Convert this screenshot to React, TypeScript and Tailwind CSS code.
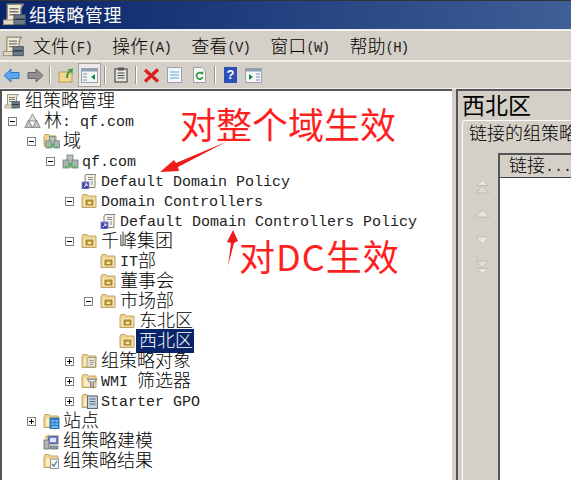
import React from "react";

function Txt({ s, menu }: { s: string; menu?: boolean }) {
  const parts = s.match(/[\x00-\x7f]+|[^\x00-\x7f]+/g) || [];
  return (
    <span className="whitespace-pre leading-[20px]">
      {parts.map((p, i) =>
        /^[\x00-\x7f]/.test(p) ? (
          <span
            key={i}
            className={
              menu
                ? "font-['Liberation_Mono',monospace] text-[14px] tracking-[-0.7px] text-[#222] align-[1px]"
                : "font-['Liberation_Mono',monospace] text-[15px] text-[#222] align-[1px]"
            }
          >
            {p}
          </span>
        ) : (
          <span key={i} className="font-['Noto_Sans_CJK_SC',sans-serif] text-[18px] font-light">{p}</span>
        )
      )}
    </span>
  );
}

const Folder = ({ children }: { children?: React.ReactNode }) => (
  <svg width="17" height="16" viewBox="0 0 17 16" className="shrink-0">
    <path d="M1 3.5 L1 14.5 L15 14.5 L15 3 L7 3 L6 1.5 L2 1.5 Z" fill="#f0d490" stroke="#c0a468" />
    <path d="M3 5.5 H14 V13 H3 Z" fill="#f9ecc4" />
    {children}
  </svg>
);
const OU = () => (
  <Folder>
    <rect x="5" y="7" width="7" height="5" fill="#c9a544" stroke="#8a6d1f" strokeWidth="0.8" />
    <rect x="7" y="9" width="3" height="2" fill="#f6e7a8" />
  </Folder>
);
const Servers = () => (
  <g>
    <rect x="5" y="2" width="6" height="12" fill="#b9c4c4" stroke="#6f7a7a" strokeWidth="0.8" />
    <rect x="1" y="7" width="6" height="8" fill="#a8b4b4" stroke="#6f7a7a" strokeWidth="0.8" />
    <rect x="10" y="7" width="6" height="8" fill="#a8b4b4" stroke="#6f7a7a" strokeWidth="0.8" />
    <rect x="7" y="10" width="3" height="3" fill="#3fbf3f" />
    <rect x="3" y="13" width="2" height="2" fill="#3fbf3f" />
    <rect x="12" y="13" width="2" height="2" fill="#3fbf3f" />
  </g>
);
const Scroll = ({ size = 16 }: { size?: number }) => (
  <svg width={size} height={size} viewBox="0 0 16 16" className="shrink-0">
    <path d="M3.5 1.5 H14.5 C13 2 13 4 12.5 5 V10 H11 L2 14.5 H1.5 C3.5 13 3.5 11 3.5 10 Z" fill="#efe8d4" stroke="#8f8a78" strokeWidth="0.9" />
    <path d="M5 4.5H11M5 6.5H11M5 8.5H9" stroke="#77736a" strokeWidth="0.9" />
    <rect x="1" y="12" width="10" height="3" fill="#e4dcc2" stroke="#9a9480" strokeWidth="0.7" />
    <rect x="8" y="8.5" width="7.5" height="6.5" fill="#6b7b87" stroke="#4a5560" strokeWidth="0.7" />
    <rect x="8.5" y="11" width="6.5" height="1" fill="#2f3a44" />
  </svg>
);
const GpoLink = () => (
  <svg width="17" height="16" viewBox="0 0 17 16" className="shrink-0">
    <path d="M5 1.5 H15 C14 3 14 4 14 5 V14.5 H4 V3 Z" fill="#f4f2ea" stroke="#85826f" />
    <path d="M7 4.5H12M7 6.5H12M10 9H12M10 11H12" stroke="#8a8a8a" />
    <rect x="1" y="9" width="7" height="7" fill="#3b3fa6" stroke="#8a8dc5" />
    <path d="M3 14 L5.5 11.5 M3.8 11 H6 V13.2" stroke="#fff" strokeWidth="1" fill="none" />
  </svg>
);
const Forest = () => (
  <svg width="17" height="16" viewBox="0 0 17 16" className="shrink-0">
    <path d="M8.5 1 L12.5 8 H4.5 Z" fill="#ddd" stroke="#777" strokeWidth="0.8" />
    <path d="M4.5 7 L8.5 14.5 H0.8 Z" fill="#c4c4c4" stroke="#777" strokeWidth="0.8" />
    <path d="M12.5 7 L16.2 14.5 H8.5 Z" fill="#c4c4c4" stroke="#777" strokeWidth="0.8" />
  </svg>
);
const FolderDomains = () => (
  <svg width="17" height="17" viewBox="0 0 17 17" className="shrink-0">
    <path d="M1 3.5 L1 13 L13 13 L13 3 L7 3 L6 1.5 L2 1.5 Z" fill="#f0d490" stroke="#c0a468" />
    <g transform="translate(2 1.5) scale(0.9)"><Servers /></g>
  </svg>
);
const Domain = () => (
  <svg width="17" height="16" viewBox="0 0 17 16" className="shrink-0"><Servers /></svg>
);
const GpObjects = () => (
  <Folder>
    <path d="M7 4.5 H15.5 C14.5 6 14.5 7 14.5 8 V14 H6 V6 Z" fill="#e9e4d2" stroke="#9a9680" strokeWidth="0.9" />
    <path d="M8.5 7.5H13M8.5 9.5H13M8.5 11.5H12" stroke="#a5a08c" />
  </Folder>
);
const Wmi = () => (
  <Folder>
    <path d="M6 6 H16 L12.5 10 V15 L9.5 13.5 V10 Z" fill="#b8bcc0" stroke="#6f7479" strokeWidth="0.9" />
    <path d="M8 7.5H14" stroke="#eee" />
  </Folder>
);
const Starter = () => (
  <Folder>
    <rect x="6.5" y="3" width="10" height="12.5" fill="#c6d1de" stroke="#5a6a80" />
    <path d="M8.5 6H14.5M8.5 8.5H14.5M8.5 11H14.5" stroke="#5a6a80" />
  </Folder>
);
const Sites = () => (
  <Folder>
    <rect x="7" y="5" width="9" height="11" fill="#2d86c9" stroke="#1e5f95" strokeWidth="0.8" />
    <path d="M8.5 8H11M12.5 8H15M8.5 11H11M12.5 11H15M8.5 14H15" stroke="#bfe3ff" />
  </Folder>
);
const Modeling = () => (
  <svg width="17" height="17" viewBox="0 0 17 17" className="shrink-0">
    <rect x="5" y="3" width="10" height="8" fill="#6f7fd0" stroke="#555" strokeWidth="0.8" />
    <rect x="7" y="5" width="6" height="4" fill="#dfe6ff" />
    <rect x="1" y="7" width="5" height="9" fill="#b5b5b5" stroke="#666" strokeWidth="0.8" />
    <path d="M7 13 H15 V16 H7 Z" fill="#8a9ab5" stroke="#666" strokeWidth="0.7" />
    <path d="M2 5 L6 2" stroke="#d9b85a" strokeWidth="2" />
  </svg>
);
const Results = () => (
  <Folder>
    <rect x="7.5" y="6" width="8" height="9.5" fill="#f4f4f4" stroke="#8a8a8a" strokeWidth="0.9" />
    <path d="M9 11 L11 13 L14 8" stroke="#3a7a9a" strokeWidth="1.1" fill="none" />
  </Folder>
);

const Exp = ({ open }: { open: boolean }) => (
  <span className="relative block h-[9px] w-[9px] shrink-0 border border-[#808080] bg-white">
    <span className="absolute left-[1px] top-[3px] h-px w-[5px] bg-black" />
    {!open && <span className="absolute left-[3px] top-[1px] h-[5px] w-px bg-black" />}
  </span>
);

function Row({
  exp,
  icon,
  text,
  selected,
  children,
}: {
  exp?: "open" | "closed";
  icon: React.ReactNode;
  text: string;
  selected?: boolean;
  children?: React.ReactNode;
}) {
  return (
    <div>
      <div className="flex h-[20px] items-center text-black">
        <span className="flex w-[16px] shrink-0 items-center">{exp && <Exp open={exp === "open"} />}</span>
        <span className="flex w-[20px] shrink-0 items-center">{icon}</span>
        <span className={selected ? "ml-[-3px] bg-[#0a246a] pl-[3px] pr-[1px] text-white" : ""}>
          <Txt s={text} />
        </span>
      </div>
      {children && <div className="ml-[19px]">{children}</div>}
    </div>
  );
}

const Sep = () => <span className="mx-[3px] block h-[18px] w-[2px] border-r border-white bg-[#9a968e]" />;

const TbBtn = ({ children, active }: { children: React.ReactNode; active?: boolean }) => (
  <span className={"flex h-[24px] w-[23px] items-center justify-center " + (active ? "border border-[#a8a49c] bg-[#eeebe6]" : "")}>
    {children}
  </span>
);

const WinIcon = ({ right }: { right?: boolean }) => (
  <svg width="17" height="15" viewBox="0 0 17 15">
    <rect x="0.5" y="0.5" width="16" height="14" fill="#f5f5f5" stroke="#9aa3ad" />
    <rect x="1" y="1" width="15" height="2.5" fill="#8aa0b8" />
    {right ? (
      <>
        <path d="M4 6 L8 9 L4 12 Z" fill="#1f8a4c" />
        <path d="M11 6H15M11 9H15M11 12H15" stroke="#6f93b5" />
      </>
    ) : (
      <>
        <path d="M2 6H6M2 9H6M2 12H6" stroke="#6f93b5" />
        <path d="M14 6 L10 9 L14 12 Z" fill="#1f8a4c" />
      </>
    )}
  </svg>
);

const Tri = ({ up, dbl }: { up: boolean; dbl?: boolean }) => (
  <svg width="15" height="15" viewBox="0 0 15 15">
    {up ? (
      dbl ? (
        <>
          <path d="M7.5 1 L13 6.5 H2 Z" fill="#e8e6e0" stroke="#b5b2aa" strokeWidth="0.7" />
          <path d="M7.5 7 L14 14 H1 Z" fill="#dcdad4" stroke="#b5b2aa" strokeWidth="0.7" />
        </>
      ) : (
        <path d="M7.5 4 L14 11 H1 Z" fill="#e8e6e0" stroke="#b5b2aa" strokeWidth="0.7" />
      )
    ) : dbl ? (
      <>
        <path d="M1 1 H14 L7.5 8 Z" fill="#dcdad4" stroke="#b5b2aa" strokeWidth="0.7" />
        <path d="M2 8.5 H13 L7.5 14 Z" fill="#e8e6e0" stroke="#b5b2aa" strokeWidth="0.7" />
      </>
    ) : (
      <path d="M1 4 H14 L7.5 11 Z" fill="#e8e6e0" stroke="#b5b2aa" strokeWidth="0.7" />
    )}
  </svg>
);

export default function App() {
  return (
    <div className="relative flex h-[480px] w-[571px] flex-col overflow-hidden bg-[#d4d0c8]">
      {/* title */}
      <div className="flex h-[29px] shrink-0 items-center gap-[3px] border-t border-[#333] bg-gradient-to-r from-[#0a246a] to-[#3f5f96] pb-[2px] pl-[2px] text-white">
        <Scroll size={24} />
        <span className="font-['Noto_Sans_CJK_SC',sans-serif] text-[18px] tracking-[0.6px]">组策略管理</span>
      </div>
      {/* menu */}
      <div className="flex h-[33px] shrink-0 items-center border-y-2 border-t-[#f2f0ec] border-b-[#f0eeea] bg-[#d4d0c8] pl-[2px] pt-[1px] text-black">
        <Scroll size={22} />
        <div className="ml-[9px] flex gap-[20px]">
          {["文件(F)", "操作(A)", "查看(V)", "窗口(W)", "帮助(H)"].map((m) => (
            <Txt key={m} s={m} menu />
          ))}
        </div>
      </div>
      {/* toolbar */}
      <div className="flex h-[26px] shrink-0 items-center pl-[3px]">
        <svg width="17" height="15" viewBox="0 0 17 15" className="mr-[3px]">
          <path d="M1 7.5 L8 1 V4.5 H16 V10.5 H8 V14 Z" fill="#5aa6e8" stroke="#2f77c2" />
        </svg>
        <svg width="17" height="15" viewBox="0 0 17 15" className="ml-[4px]">
          <path d="M16 7.5 L9 1 V4.5 H1 V10.5 H9 V14 Z" fill="#8f8f8f" stroke="#666" />
        </svg>
        <span className="ml-[2px]"><Sep /></span>
        <TbBtn>
          <svg width="16" height="16" viewBox="0 0 16 16">
            <path d="M1 5 H14 V15 H1 Z" fill="#f3d98f" stroke="#b8975a" />
            <path d="M8 11 C8 7 9 5 11 4 L9.5 2.5 L15 1.5 L14.5 6.5 L13 5 C11 6 10 8 10 11 Z" fill="#3e9d4a" />
          </svg>
        </TbBtn>
        <span className="ml-[1px]">
          <TbBtn active><WinIcon /></TbBtn>
        </span>
        <Sep />
        <TbBtn>
          <svg width="14" height="16" viewBox="0 0 14 16">
            <rect x="1" y="2" width="12" height="13" fill="#e8e6e0" stroke="#333" />
            <rect x="4" y="0.5" width="6" height="3" fill="#555" />
            <path d="M3.5 6H10.5M3.5 8.5H10.5M3.5 11H10.5" stroke="#444" />
          </svg>
        </TbBtn>
        <Sep />
        <TbBtn>
          <svg width="17" height="15" viewBox="0 0 17 15">
            <path d="M2 2 L15 13.5 M15 1.5 L2 13.5" stroke="#d9201c" strokeWidth="3.4" />
          </svg>
        </TbBtn>
        <TbBtn>
          <svg width="15" height="16" viewBox="0 0 15 16">
            <rect x="0.5" y="0.5" width="14" height="15" fill="#f4f6fa" stroke="#9aa3ad" />
            <path d="M3 5H12M3 8H12M3 11H12" stroke="#5fa8d8" />
          </svg>
        </TbBtn>
        <span className="ml-[2px]">
          <TbBtn>
            <svg width="13" height="16" viewBox="0 0 13 16">
              <path d="M0.5 0.5 H9 L12.5 4 V15.5 H0.5 Z" fill="#f8f8f8" stroke="#a0a0a0" />
              <path d="M9 6.5 A3.2 3.2 0 1 0 9.7 10" stroke="#2f9a3f" strokeWidth="1.8" fill="none" />
              <path d="M7.5 5 L10.5 4.5 L10 8 Z" fill="#2f9a3f" />
            </svg>
          </TbBtn>
        </span>
        <Sep />
        <TbBtn>
          <span className="flex h-[16px] w-[13px] items-center justify-center bg-[#2e4fb5] font-['Liberation_Sans',sans-serif] text-[13px] font-bold text-white">?</span>
        </TbBtn>
        <TbBtn><WinIcon right /></TbBtn>
      </div>
      {/* main */}
      <div className="flex min-h-0 flex-1 gap-[4px] border-t border-[#f0eeea]">
        <div className="h-full w-[452px] shrink-0 overflow-hidden border-l-2 border-t-2 border-[#555] bg-white">
          <div className="ml-[-13px]">
            <Row icon={<span className="ml-[-1px]"><Scroll /></span>} text="组策略管理">
              <Row exp="open" icon={<Forest />} text="林: qf.com">
                <Row exp="open" icon={<FolderDomains />} text="域">
                  <Row exp="open" icon={<Domain />} text="qf.com">
                    <Row icon={<GpoLink />} text="Default Domain Policy" />
                    <Row exp="open" icon={<OU />} text="Domain Controllers">
                      <Row icon={<GpoLink />} text="Default Domain Controllers Policy" />
                    </Row>
                    <Row exp="open" icon={<OU />} text="千峰集团">
                      <Row icon={<OU />} text="IT部" />
                      <Row icon={<OU />} text="董事会" />
                      <Row exp="open" icon={<OU />} text="市场部">
                        <Row icon={<OU />} text="东北区" />
                        <Row icon={<OU />} text="西北区" selected />
                      </Row>
                    </Row>
                    <Row exp="closed" icon={<GpObjects />} text="组策略对象" />
                    <Row exp="closed" icon={<Wmi />} text="WMI 筛选器" />
                    <Row exp="closed" icon={<Starter />} text="Starter GPO" />
                  </Row>
                </Row>
                <Row exp="closed" icon={<Sites />} text="站点" />
                <Row icon={<Modeling />} text="组策略建模" />
                <Row icon={<Results />} text="组策略结果" />
              </Row>
            </Row>
          </div>
        </div>
        <div className="flex min-w-0 flex-1 flex-col overflow-hidden border-l-2 border-t-2 border-[#555] pl-[4px]">
          <div className="h-[29px] shrink-0 font-['Noto_Sans_CJK_SC',sans-serif] text-[23px] leading-[26px] text-black">西北区</div>
          <div className="flex-1 rounded-tl-[4px] border-l border-t border-white">
            <div className="mt-[1px] h-[20px] pl-[6px] font-['Noto_Sans_CJK_SC',sans-serif] text-[18px] font-light leading-[20px] whitespace-nowrap text-black">
              链接的组策略
            </div>
            <div className="ml-[11px] mt-[11px] flex h-full">
              <div className="flex w-[24px] shrink-0 flex-col items-center gap-[12px] pr-[8px] pt-[26px]">
                <Tri up dbl />
                <Tri up />
                <Tri up={false} />
                <Tri up={false} dbl />
              </div>
              <div className="flex-1 border-l-2 border-t-2 border-[#555] bg-white">
                <div className="flex h-[23px] items-center border-b border-[#444] bg-[#d4d0c8] pl-[9px] text-black">
                  <Txt s="链接..." />
                </div>
              </div>
            </div>
          </div>
        </div>
      </div>

      {/* annotations */}
      <span className="absolute left-[180px] top-[100px] font-['Noto_Sans_CJK_SC',sans-serif] text-[36px] leading-[46px] whitespace-nowrap text-[#ff1f1f]">
        对整个域生效
      </span>
      <span className="absolute left-[239px] top-[232px] font-['Noto_Sans_CJK_SC',sans-serif] text-[36px] leading-[46px] tracking-[1px] whitespace-nowrap text-[#ff1f1f]">
        对DC生效
      </span>
      <svg className="absolute left-0 top-0" width="571" height="480" viewBox="0 0 571 480">
        <path d="M226 142 L176 163 L174 160 L160 172 L179 171 L178 167 Z" fill="#f01c1c" />
        <path d="M228 266 L231 243 L227 242 L233 230 L238 241 L234 243 Z" fill="#f01c1c" />
      </svg>
    </div>
  );
}
